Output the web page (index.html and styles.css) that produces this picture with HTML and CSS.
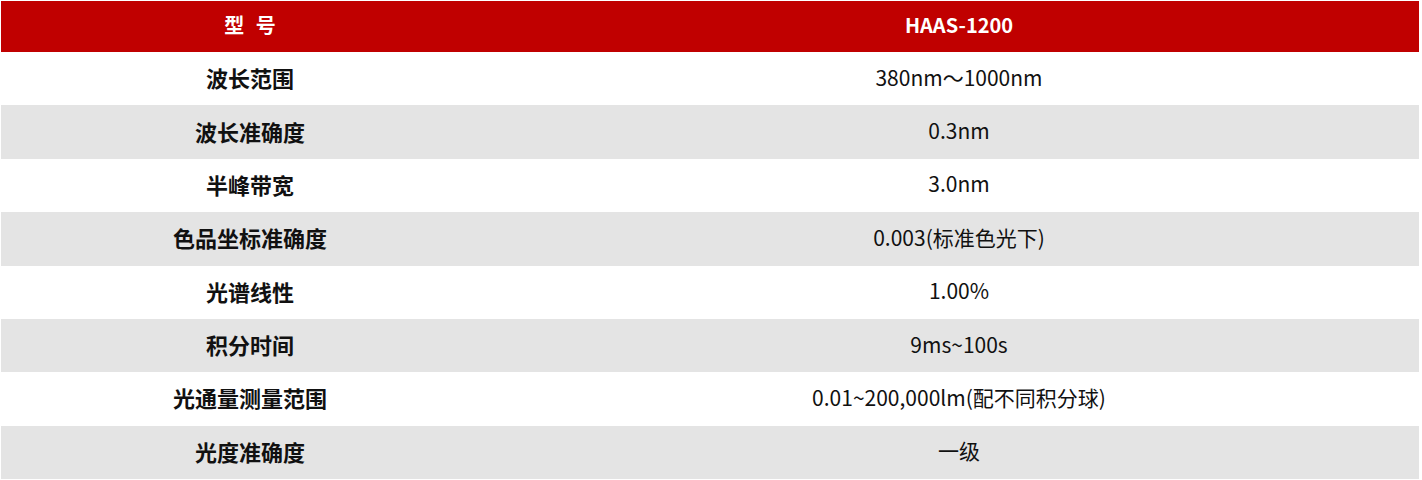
FILE: index.html
```html
<!DOCTYPE html>
<html lang="zh">
<head>
<meta charset="utf-8">
<link rel="stylesheet" href="styles.css">
</head>
<body>
<div class="spec">
  <div class="row head"><div class="k">型 号</div><div class="v">HAAS-1200</div></div>
  <div class="row"><div class="k">波长范围</div><div class="v">380nm～1000nm</div></div>
  <div class="row alt"><div class="k">波长准确度</div><div class="v">0.3nm</div></div>
  <div class="row"><div class="k">半峰带宽</div><div class="v">3.0nm</div></div>
  <div class="row alt"><div class="k">色品坐标准确度</div><div class="v">0.003(标准色光下)</div></div>
  <div class="row"><div class="k">光谱线性</div><div class="v">1.00%</div></div>
  <div class="row alt"><div class="k">积分时间</div><div class="v">9ms~100s</div></div>
  <div class="row"><div class="k">光通量测量范围</div><div class="v">0.01~200,000lm(配不同积分球)</div></div>
  <div class="row alt"><div class="k">光度准确度</div><div class="v">一级</div></div>
</div>
</body>
</html>
```
FILE: styles.css
```css
html, body { margin: 0; padding: 0; background: #fff; }
body { padding: 1px 0 0 1px; }
.spec {
  width: 1418px;
  display: grid;
  grid-template-rows: 51px repeat(8, 53.375px);
  font-family: "Noto Sans CJK SC", "Noto Sans", sans-serif;
  color: #111;
}
.row { display: grid; grid-template-columns: 498px 1fr; align-items: center; }
.row.alt { background: #e4e4e4; }
.k, .v { text-align: center; line-height: 1; padding-bottom: 3px; }
.k { font-size: 22px; font-weight: 700; }
.v { font-size: 21px; font-weight: 400; }
.row.head { background: #c00000; color: #fff; }
.row.head .k, .row.head .v { font-size: 20px; font-weight: 700; }
.row.head .k { word-spacing: 7px; }
```
